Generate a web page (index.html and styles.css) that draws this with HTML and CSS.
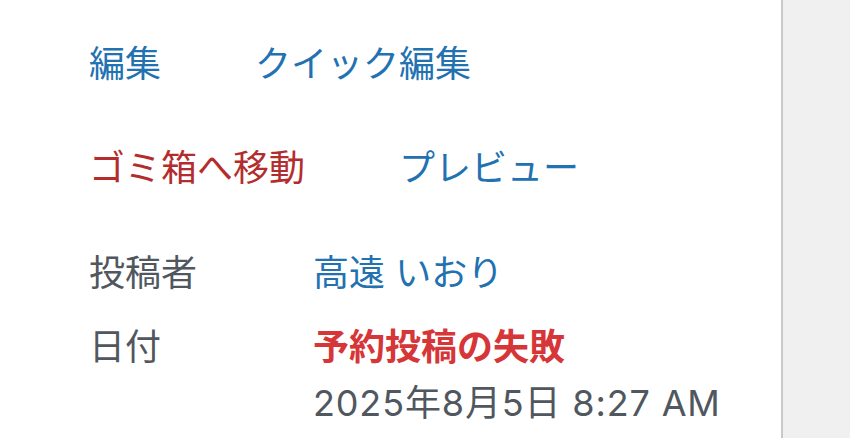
FILE: index.html
```html
<!DOCTYPE html>
<html lang="ja">
<head>
<meta charset="utf-8">
<title>投稿</title>
<link rel="stylesheet" href="styles.css">
</head>
<body>
<div class="layout">
  <main class="panel">
    <div class="row-actions">
      <a class="action" href="#">編集</a>
      <a class="action" href="#">クイック編集</a>
      <a class="action trash" href="#">ゴミ箱へ移動</a>
      <a class="action" href="#">プレビュー</a>
    </div>
    <dl class="meta">
      <dt class="label">投稿者</dt>
      <dd class="value"><a class="action" href="#">高遠 いおり</a></dd>
      <dt class="label">日付</dt>
      <dd class="value">
        <span class="missed">予約投稿の失敗</span>
        <span class="date">2025年8月5日 8:27 AM</span>
      </dd>
    </dl>
  </main>
  <aside class="side"></aside>
</div>
</body>
</html>
```

FILE: styles.css
```css
* { box-sizing: border-box; }
html, body { margin: 0; padding: 0; height: 100%; }
body {
  font-family: Inter, "Noto Sans CJK JP", sans-serif;
  font-size: 36px;
  color: #50575e;
  background: #f0f0f1;
}
.layout {
  display: flex;
  height: 438px;
  overflow: hidden;
}
.panel {
  width: 783px;
  flex: none;
  background: #ffffff;
  border-right: 2px solid #c8c9cc;
  padding: 36px 0 0 89px;
}
.side {
  flex: 1;
  background: #f0f0f1;
}
.row-actions {
  display: flex;
  flex-wrap: wrap;
  width: 600px;
  column-gap: 94px;
  row-gap: 48px;
  line-height: 56px;
}
.action {
  color: #2271b1;
  text-decoration: none;
}
.action.trash { color: #b32d2e; }
.meta {
  margin: 49px 0 0;
  display: grid;
  grid-template-columns: 224px 1fr;
  row-gap: 18px;
  line-height: 56px;
}
.label { margin: 0; }
.value { margin: 0; display: flex; flex-direction: column; }
.missed {
  color: #d63638;
  font-weight: 700;
}
.date {
  color: #50575e;
  letter-spacing: 0.85px;
}
```
